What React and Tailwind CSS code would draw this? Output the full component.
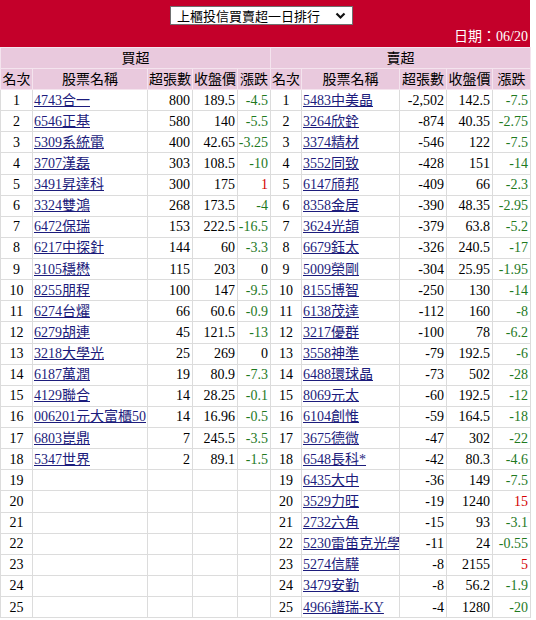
import React from 'react';

const buyList = [
    ['4743合一', '800', '189.5', '-4.5'],
    ['6546正基', '580', '140', '-5.5'],
    ['5309系統電', '400', '42.65', '-3.25'],
    ['3707漢磊', '303', '108.5', '-10'],
    ['3491昇達科', '300', '175', '1'],
    ['3324雙鴻', '268', '173.5', '-4'],
    ['6472保瑞', '153', '222.5', '-16.5'],
    ['6217中探針', '144', '60', '-3.3'],
    ['3105穩懋', '115', '203', '0'],
    ['8255朋程', '100', '147', '-9.5'],
    ['6274台燿', '66', '60.6', '-0.9'],
    ['6279胡連', '45', '121.5', '-13'],
    ['3218大學光', '25', '269', '0'],
    ['6187萬潤', '19', '80.9', '-7.3'],
    ['4129聯合', '14', '28.25', '-0.1'],
    ['006201元大富櫃50', '14', '16.96', '-0.5'],
    ['6803崑鼎', '7', '245.5', '-3.5'],
    ['5347世界', '2', '89.1', '-1.5'],
];

const sellList = [
    ['5483中美晶', '-2,502', '142.5', '-7.5'],
    ['3264欣銓', '-874', '40.35', '-2.75'],
    ['3374精材', '-546', '122', '-7.5'],
    ['3552同致', '-428', '151', '-14'],
    ['6147頎邦', '-409', '66', '-2.3'],
    ['8358金居', '-390', '48.35', '-2.95'],
    ['3624光頡', '-379', '63.8', '-5.2'],
    ['6679鈺太', '-326', '240.5', '-17'],
    ['5009榮剛', '-304', '25.95', '-1.95'],
    ['8155博智', '-250', '130', '-14'],
    ['6138茂達', '-112', '160', '-8'],
    ['3217優群', '-100', '78', '-6.2'],
    ['3558神準', '-79', '192.5', '-6'],
    ['6488環球晶', '-73', '502', '-28'],
    ['8069元太', '-60', '192.5', '-12'],
    ['6104創惟', '-59', '164.5', '-18'],
    ['3675德微', '-47', '302', '-22'],
    ['6548長科*', '-42', '80.3', '-4.6'],
    ['6435大中', '-36', '149', '-7.5'],
    ['3529力旺', '-19', '1240', '15'],
    ['2732六角', '-15', '93', '-3.1'],
    ['5230雷笛克光學', '-11', '24', '-0.55'],
    ['5274信驊', '-8', '2155', '5'],
    ['3479安勤', '-8', '56.2', '-1.9'],
    ['4966譜瑞-KY', '-4', '1280', '-20'],
];

// 漲跌顏色: 負綠、正紅、平盤黑
const changeColor = (v) => {
    if (v.startsWith('-')) return 'text-[#1f7a1f]';
    if (v === '0') return 'text-black';
    return 'text-[#d40000]';
};

const cell = 'border border-[#dcdcdc] p-0 whitespace-nowrap overflow-hidden';
const headCell = 'border border-[#f4e4ee] p-0 font-normal whitespace-nowrap overflow-hidden';

const Side = ({ rank, item }) => (
    <>
        <td className={`${cell} text-center`}>{rank}</td>
        <td className={`${cell} text-left pl-[1px]`}>
            {item && <a href="#" className="text-[#1c1c7c] underline">{item[0]}</a>}
        </td>
        <td className={`${cell} text-right pr-[2px]`}>{item ? item[1] : ''}</td>
        <td className={`${cell} text-right pr-[2px]`}>{item ? item[2] : ''}</td>
        <td className={`${cell} text-right pr-[2px] ${item ? changeColor(item[3]) : ''}`}>{item ? item[3] : ''}</td>
    </>
);

const HeadRow = () => (
    <>
        <th className={headCell}>名次</th>
        <th className={headCell}>股票名稱</th>
        <th className={headCell}>超張數</th>
        <th className={headCell}>收盤價</th>
        <th className={headCell}>漲跌</th>
    </>
);

export default function App() {
    const rows = Array.from({ length: 25 }, (_, i) => i);
    return (
        <div className="bg-white w-[536px] min-h-[620px] text-[14px] text-black font-['Liberation_Serif','Noto_Sans_CJK_TC',serif]">
            <div className="w-[530px] h-[47px] bg-[#c4002a] flex flex-col">
                <div className="pt-[6px] pl-[170px]">
                    <div className="w-[183px] h-[19px] bg-white border border-[#6f6f6f] flex items-center justify-between pl-[6px] pr-[6px] font-['Noto_Sans_CJK_TC',sans-serif] text-[13px] leading-none text-black">
                        <span>上櫃投信買賣超一日排行</span>
                        <svg width="11" height="8" viewBox="0 0 11 8" fill="none">
                            <path d="M1.5 1.5 L5.5 5.5 L9.5 1.5" stroke="#111" strokeWidth="2.2" />
                        </svg>
                    </div>
                </div>
                <div className="mt-[2px] text-right pr-[2px] text-white leading-[20px]">日期：06/20</div>
            </div>
            <table className="table-fixed border-collapse w-[530px] leading-[17px]">
                <colgroup>
                    <col className="w-[32px]" />
                    <col className="w-[115px]" />
                    <col className="w-[45px]" />
                    <col className="w-[45px]" />
                    <col className="w-[33px]" />
                    <col className="w-[31px]" />
                    <col className="w-[98px]" />
                    <col className="w-[47px]" />
                    <col className="w-[46px]" />
                    <col className="w-[38px]" />
                </colgroup>
                <thead className="bg-[#e9c9dd]">
                    <tr className="h-[21px]">
                        <th colSpan={5} className={headCell}>買超</th>
                        <th colSpan={5} className={headCell}>賣超</th>
                    </tr>
                    <tr className="h-[21px]">
                        <HeadRow />
                        <HeadRow />
                    </tr>
                </thead>
                <tbody>
                    {rows.map(i => (
                        <tr key={i} className="h-[21.125px]">
                            <Side rank={i + 1} item={buyList[i]} />
                            <Side rank={i + 1} item={sellList[i]} />
                        </tr>
                    ))}
                </tbody>
            </table>
        </div>
    );
}
